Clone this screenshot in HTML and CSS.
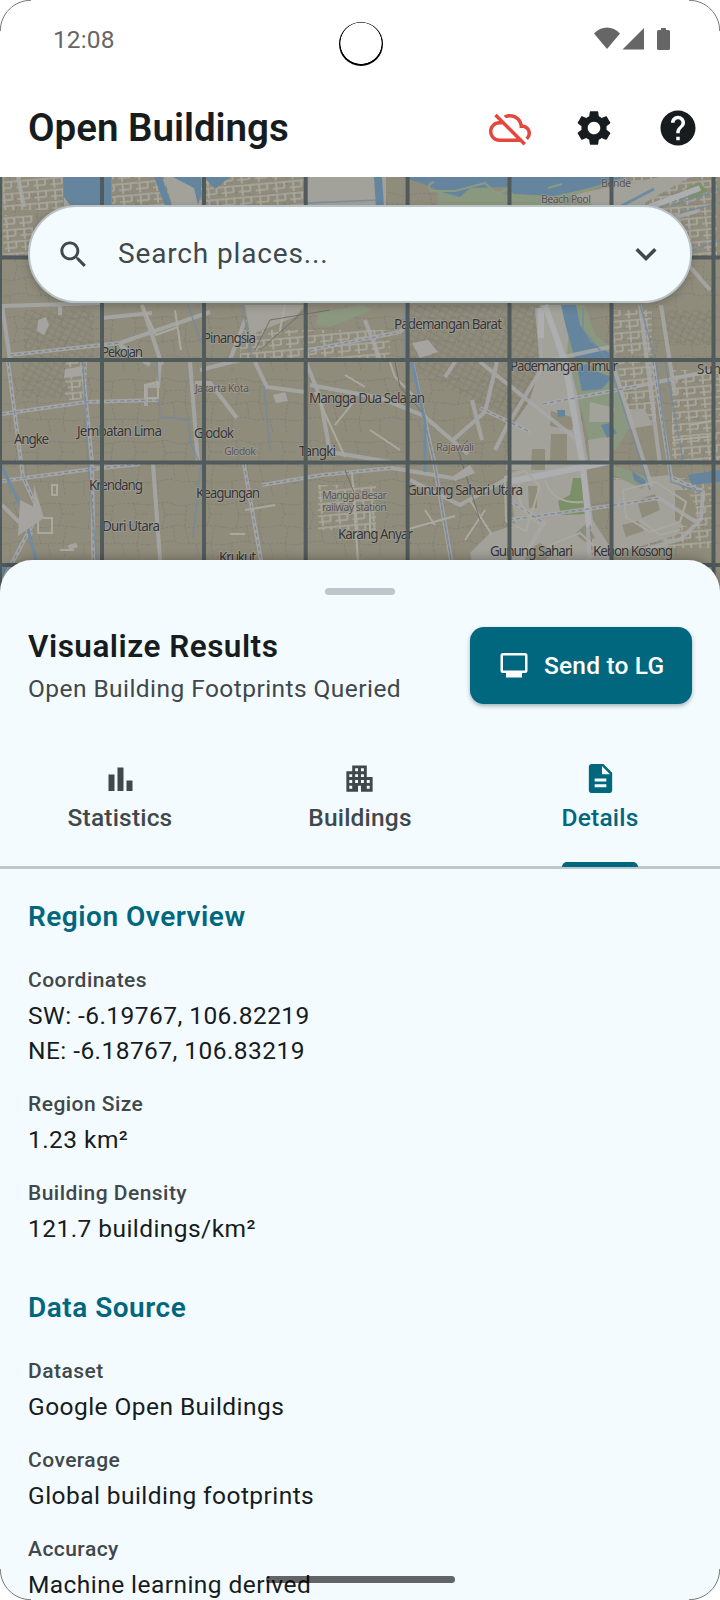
FILE: index.html
```html
<!DOCTYPE html>
<html lang="en">
<head>
<meta charset="utf-8">
<title>Open Buildings</title>
<link rel="stylesheet" href="styles.css">
</head>
<body>
<div class="phone">
  <div class="status">
    <span class="clock">12:08</span>
    <span class="camera"></span>
    <svg class="status-icons" viewBox="0 0 78 24"><path d="M13 22L0 6.500C7-1.500 19-1.500 26 6.500z"/><path d="M28.500 22.500L50 1v21.500z"/><path d="M67 1h5v2h2.500q1.500 0 1.500 1.500v17q0 1.500-1.500 1.500h-10q-1.500 0-1.500-1.500v-17q0-1.500 1.500-1.500H67z"/></svg>
  </div>
  <header class="appbar">
    <h1>Open Buildings</h1>
    <svg class="ic42 red" viewBox="0 0 24 24"><path d="M24 15c0-2.640-2.050-4.780-4.650-4.960C18.670 6.590 15.640 4 12 4c-1.330 0-2.570.36-3.650.97l1.490 1.490C10.510 6.170 11.230 6 12 6c3.040 0 5.500 2.460 5.500 5.500v.5H19c1.660 0 3 1.340 3 3 0 .99-.48 1.850-1.210 2.400l1.410 1.410c1.090-.92 1.800-2.270 1.800-3.810zM4.410 3.860L3 5.270l2.770 2.770h-.42C2.340 8.360 0 10.910 0 14c0 3.310 2.690 6 6 6h11.730l2 2 1.410-1.410L4.410 3.860zM6 18c-2.210 0-4-1.790-4-4s1.790-4 4-4h1.730l8 8H6z"/></svg>
    <svg class="ic42" viewBox="0 0 24 24"><path d="M19.140 12.940c.04-.3.06-.61.06-.94 0-.32-.02-.64-.07-.94l2.030-1.580c.18-.14.23-.41.12-.61l-1.920-3.320c-.12-.22-.37-.29-.59-.22l-2.390.96c-.5-.38-1.030-.7-1.620-.94l-.36-2.540c-.04-.24-.24-.41-.48-.41h-3.840c-.24 0-.43.17-.47.41l-.36 2.540c-.59.24-1.130.57-1.620.94l-2.390-.96c-.22-.08-.47 0-.59.22L2.740 8.870c-.12.21-.08.47.12.61l2.030 1.580c-.05.3-.09.63-.09.94s.02.64.07.94l-2.030 1.580c-.18.14-.23.41-.12.61l1.920 3.320c.12.22.37.29.59.22l2.390-.96c.5.38 1.030.7 1.620.94l.36 2.540c.05.24.24.41.48.41h3.840c.24 0 .44-.17.47-.41l.36-2.540c.59-.24 1.130-.56 1.620-.94l2.390.96c.22.08.47 0 .59-.22l1.920-3.320c.12-.22.07-.47-.12-.61l-2.010-1.580zM12 15.600c-1.980 0-3.600-1.620-3.600-3.600s1.620-3.600 3.600-3.600 3.600 1.620 3.600 3.600-1.620 3.600-3.600 3.600z"/></svg>
    <svg class="ic42" viewBox="0 0 24 24"><path d="M12 2C6.480 2 2 6.480 2 12s4.480 10 10 10 10-4.480 10-10S17.520 2 12 2zm1 17h-2v-2h2v2zm2.070-7.750l-.9.92C13.450 12.900 13 13.500 13 15h-2v-.5c0-1.100.45-2.100 1.170-2.830l1.240-1.260c.37-.36.59-.86.59-1.410 0-1.100-.9-2-2-2s-2 .9-2 2H8c0-2.210 1.790-4 4-4s4 1.790 4 4c0 .88-.36 1.680-.93 2.250z"/></svg>
  </header>
  <section class="map">
    <svg class="map-art" viewBox="0 177 720 423">
      <defs>
        <pattern id="lanes" width="74" height="62" patternUnits="userSpaceOnUse">
          <path class="lane" d="M0 9l18-3 14 4 20-3 22 2M0 31l12 2 17-4 15 3 12-3 18 2M0 49l22-4 13 3 20-1 19 2M14 7l3 12-3 13M39 9l-2 20 4 19M60 7l2 11-3 12M25 30l2 15M66 31l-3 17 2 14M10 48v14M48 48l3 14M17 19l20-1M62 18h12"/>
        </pattern>
        <pattern id="dense" width="7" height="6" patternUnits="userSpaceOnUse" patternTransform="rotate(28)"><path class="dense" d="M0 1h7M2 1v5"/></pattern>
        <pattern id="streets" width="17" height="12" patternUnits="userSpaceOnUse" patternTransform="rotate(-5)"><path class="street" d="M0 2h17M0 8h12M4 2v10M12 2v6"/></pattern>
      </defs>
      <rect class="land" y="177" width="720" height="423"/>
      <rect y="177" width="720" height="423" fill="url(#lanes)"/>
      <!-- dense quarters -->
      <path fill="url(#dense)" d="M24 310h70v50H24zM22 362h45v36H22zM410 305h130v52l-15 70-30-15-88-45zM665 310h50v35h-50z"/>
      <path fill="url(#streets)" d="M3 177h60v33H3zM3 215h30v40H3zM112 177h90v30h-90zM204 177h100v30H204zM612 177h105v80H612zM612 310h40v45h-40zM612 362h44v60h-44zM672 370h48v90h-48zM318 485h58v45h-58zM240 330h150v28H240zM612 478h100v70H612zM65 362h22v38H65z"/>
      <!-- pale industrial and airport ground -->
      <path class="pale" d="M542 362h30l16 98-40 12-42-2 3-40 20-28zM509 472l76-12 8 60 19 30v48H480l-10-45 20-20 25-8zM540 305h32l4 58h-35zM245 305h60l-10 12-45 18zM615 408l30 2 8 15-30 5zM612 480l60-5 20 25-15 35-65 20z"/>
      <path class="pale" d="M306 177h80v30h-80zM64 177v30h28M164 177h30l8 28h-30zM570 195l90-18h30l-70 40z"/>
      <!-- airport apron blocks -->
      <path class="land" d="M551 434h16v27h-17zM532 449h13v21h-14zM528 486h9v22h-8zM551 411l24 7-3 12-22-4zM575 534l12-11 8 15-10 4zM645 429l23-7v36l-23 2zM675 490h12l10 20-8 18-14-8zM637 500l18-6 5 16-18 8zM520 555l20-12 15 10-20 14zM622 525l16-4 6 10-18 6z"/>
      <path class="green" d="M571 305h14l10 30 20 15 14 78-12 20-22 16-10-40-18-70zM612 465l36 12-6 12-30-15zM318 313l45-8 8 5-40 17-15-2zM438 183l25-5 45 17 55-14 65-4-58 20-35 11-98-1z"/>
      <path class="park" d="M573 478h12l4 36-28 1-3-14 12-6zM685 189l14-7 9 9-18 9z"/>
      <path class="pale" d="M590 402l25 6-4 14-22 0zM588 440l24-4v22l-22 4z"/>
      <!-- water -->
      <path class="water" d="M63 177h48v28H70l-6-8zM154 177h8l10 29-6 2zM173 177h28v18l-3 10-4-17zM204 177h26l-15 12zM374 177h8l2 30-8 1zM402 177h225l-38 11-35 8-40-2-7-7-37 1-10 9-18-5-18-8zM561 305h15l4 20 11 17 18 11v6h-34l-9-32zM577 368l12-5 6 8 17 6-10 12-20 2zM601 425l9-2 7 10-10 5zM632 471l14 10-2 6-10-7zM688 475l32-5v12l-28 3zM2 568l12-8 8 14-20 18zM557 410h8v6l-7 1z"/>
      <path class="cut" d="M430 191h25l30-8 12 11 15-7M434 182q-8 2-3 10M548 188l14-4"/>
      <!-- main roads -->
      <path class="road" d="M2 414l84-12 72-2M8 362l15 115 16 35-37 70M2 481l90-12 48-5M18 177l6 30M2 305l8 55M2 306l100-3M10 355l110-12 90-31M142 305l20 60M120 345l30 20M255 362l12 25 38 5M160 362l-2 24h-12v20M200 370l40-10M195 383l15 0 27 35M244 464l24 136M262 485l60-10 70-7 60 10M310 385l70 13 44 18 44 38M310 350l90-18 10-10M306 362l14 35 10 55 60 10M412 362l22 100 24 138M495 450l12-24 35-58-5-60M568 362l15 95 5 70 3 73M480 408l50 24M509 480l100-20M543 404l95-18 82-17M653 362l18 115 32 15-2 27-20 20-35 10M509 520l100-14 50-8 40 26M509 500l35 23-20 34-30 30M612 362l40 125M640 305l20 160M661 305l14 90M480 362l100 80M455 362l-10 15M472 400l10 40M497 362l-12 50-32 28M710 290l-30-35-40 40M60 305v10M82 362l10 100 2 138M102 318l50-5M153 464l10 136M245 320l-15 40M365 320l15 40M410 480l50 25 50-28M190 362l8 100M2 505l30 30M600 240l100-30M540 362l70-15"/>
      <path class="runway" d="M545 305l20 57 18 105 6 60M509 482l100-20M541 308v30M602 225l98-37"/>
      <!-- canals -->
      <path class="canal" d="M188 305l14 40M157 362l3 55 28 2 3 25 10 22-8 72M242 305l10 53M583 308v22l25 30 42 130M670 206l50-17M680 213l40-10M692 250l28-10M410 362l24 100 24 138M83 362l5 100 12 138M656 362l15 120 30 10M665 362l18 98M640 305l16 57M308 203l70-3M405 305v55M264 386l6 65"/>
      <path class="river" d="M2 467l22 46 22 87M412 362l13 60v50M604 215l50-26"/>
      <path class="dash" d="M2 414l84-12 72-2M8 362l15 115 16 35-37 70M2 481l90-12 48-5M10 355l110-12M244 464l24 136M262 485l60-10 70-7M412 362l22 100 24 138M509 520l100-14 50-8M653 362l18 115 32 15M543 404l95-18M310 350l90-18M82 362l10 100 2 138M620 222l80-30M509 500l35 23M480 408l50 24M590 525l5 60"/>
      <path class="minor" d="M142 305l14 30 22-8M175 310l6 40M285 305l-5 25M315 392l30 65M390 362l5 15 20 20M345 375l20 12M355 400l-20 25M370 430l30 20M275 505l-30 5M405 530l50-14M425 510l10 15M352 472l8 120M370 512v20M230 534h15M52 485h5v10h-5zM38 518h14v15H38zM60 550h14M145 385l13-3v16h-13zM505 477l20-6 15 15-14 45-20-10zM550 545l30-12 20 18-20 13-22-7zM545 480q8 25 38 22M520 480q-8 25 20 45M690 425l25-5M675 440l40-4M623 490l33-8 30 20-6 20-30 10-24-15zM640 520l20 15 20-5M465 540l20-30M470 500l22 35"/>
      <path class="rail" d="M305 310l-45 40M395 362l5 25 22 25M330 310l-60 10-15 30M345 470l12 30M468 440l-10 10 22 70"/>
      <path class="minor-fill" d="M65 370l16-4v10l-17 2zM273 395l12-3 3 9-12 2zM34 485l10 33-12 8zM68 545l8-2 2 4-9 3zM450 478l20-13 5 8-20 8zM38 320l8-3 3 8-5 10-7-4zM20 500l16 8-4 18-14 10zM412 343l16-3 10 12-18 6z"/>
      <!-- place names -->
      <g class="names">
        <text x="101" y="357" textLength="42">Pekojan</text>
        <text x="203" y="343" textLength="53">Pinangsia</text>
        <text x="394" y="329" textLength="108">Pademangan Barat</text>
        <text x="510" y="370.500" textLength="108">Pademangan Timur</text>
        <text x="697" y="374">Sunt</text>
        <text x="309" y="403" textLength="116">Mangga Dua Selatan</text>
        <text x="14" y="444" textLength="35">Angke</text>
        <text x="77" y="435.500" textLength="85">Jembatan Lima</text>
        <text x="194" y="438" textLength="40">Glodok</text>
        <text x="299" y="455.500" textLength="37">Tangki</text>
        <text x="89" y="489.500" textLength="54">Krendang</text>
        <text x="196" y="498" textLength="64">Keagungan</text>
        <text x="407" y="495" textLength="116">Gunung Sahari Utara</text>
        <text x="102" y="531" textLength="58">Duri Utara</text>
        <text x="338" y="538.500" textLength="75">Karang Anyar</text>
        <text x="219" y="562" textLength="37">Krukut</text>
        <text x="490" y="555.500" textLength="83">Gunung Sahari</text>
        <text x="593" y="555.500" textLength="80">Kebon Kosong</text>
      </g>
      <g class="stations">
        <text x="601" y="187" textLength="30">Bende</text>
        <text x="541" y="203" textLength="50">Beach Pool</text>
        <text x="195" y="391.500" textLength="54">Jakarta Kota</text>
        <text x="224" y="455" textLength="32">Glodok</text>
        <text x="436" y="451" textLength="38">Rajawali</text>
        <text x="322" y="499" textLength="65">Mangga Besar</text>
        <text x="322" y="511" textLength="65">railway station</text>
      </g>
      <path class="grid" d="M0 177v423M102 177v423M204 177v423M305.700 177v423M407.600 177v423M509.500 177v423M611.500 177v423M713.500 177v423M0 257.500h720M0 360h720M0 462.500h720M0 565h720"/>
    </svg>
    <div class="search">
      <svg class="ic35" viewBox="0 0 24 24"><path d="M15.500 14h-.79l-.28-.27C15.410 12.590 16 11.110 16 9.500 16 5.910 13.090 3 9.500 3S3 5.910 3 9.500 5.910 16 9.500 16c1.610 0 3.090-.59 4.230-1.570l.27.28v.79l5 4.990L20.490 19l-4.990-5zm-6 0C7.010 14 5 11.990 5 9.500S7.010 5 9.500 5 14 7.010 14 9.500 11.990 14 9.500 14z"/></svg>
      <span class="placeholder">Search places...</span>
      <svg class="ic42" viewBox="0 0 24 24"><path d="M7.410 8.590L12 13.170l4.590-4.580L18 10l-6 6-6-6 1.410-1.410z"/></svg>
    </div>
  </section>
  <main class="sheet">
    <div class="handle"></div>
    <div class="head">
      <div>
        <h2>Visualize Results</h2>
        <p class="sub">Open Building Footprints Queried</p>
      </div>
      <button class="send"><svg viewBox="0 0 28 25"><path fill-rule="evenodd" d="M3 0h22q2.500 0 2.500 2.500v15q0 2.500-2.500 2.500h-3v4.500H6V20H3q-2.500 0-2.500-2.500v-15Q.5 0 3 0zM3 2.500v15h22v-15z"/></svg><span>Send to LG</span></button>
    </div>
    <nav class="tabs">
      <div class="tab"><svg class="ic35" viewBox="0 0 35 35"><path d="M5.500 13.500h6V30h-6zM14.500 6.500h6V30h-6zM23.500 19.500h6V30h-6z"/></svg><span>Statistics</span></div>
      <div class="tab"><svg class="ic35" viewBox="0 0 24 24"><path d="M17 11V3H7v4H3v14h8v-4h2v4h8V11h-4zM7 19H5v-2h2v2zm0-4H5v-2h2v2zm0-4H5V9h2v2zm4 4H9v-2h2v2zm0-4H9V9h2v2zm0-4H9V5h2v2zm4 8h-2v-2h2v2zm0-4h-2V9h2v2zm0-4h-2V5h2v2zm4 12h-2v-2h2v2zm0-4h-2v-2h2v2z"/></svg><span>Buildings</span></div>
      <div class="tab active"><svg class="ic35" viewBox="0 0 24 24"><path d="M14 2H6c-1.100 0-1.990.9-1.990 2L4 20c0 1.100.89 2 1.990 2H18c1.100 0 2-.9 2-2V8l-6-6zm2 16H8v-2h8v2zm0-4H8v-2h8v2zm-3-5V3.500L18.500 9H13z"/></svg><span>Details</span></div>
    </nav>
    <div class="details">
      <section>
        <h3>Region Overview</h3>
        <dl>
          <div><dt>Coordinates</dt><dd>SW: -6.19767, 106.82219<br>NE: -6.18767, 106.83219</dd></div>
          <div><dt>Region Size</dt><dd>1.23 km²</dd></div>
          <div><dt>Building Density</dt><dd>121.7 buildings/km²</dd></div>
        </dl>
      </section>
      <section>
        <h3>Data Source</h3>
        <dl>
          <div><dt>Dataset</dt><dd>Google Open Buildings</dd></div>
          <div><dt>Coverage</dt><dd>Global building footprints</dd></div>
          <div><dt>Accuracy</dt><dd>Machine learning derived</dd></div>
        </dl>
      </section>
    </div>
  </main>
  <div class="homebar"></div>
  <svg class="corner tl" viewBox="0 0 32 32"><path d="M0 0h32Q0 0 0 32z"/><path class="arc" d="M.3 31C.3 14 14 .3 31 .3"/></svg>
  <svg class="corner tr" viewBox="0 0 32 32"><path d="M0 0h32Q0 0 0 32z"/><path class="arc" d="M.3 31C.3 14 14 .3 31 .3"/></svg>
  <svg class="corner bl" viewBox="0 0 32 32"><path d="M0 0h32Q0 0 0 32z"/><path class="arc" d="M.3 31C.3 14 14 .3 31 .3"/></svg>
  <svg class="corner br" viewBox="0 0 32 32"><path d="M0 0h32Q0 0 0 32z"/><path class="arc" d="M.3 31C.3 14 14 .3 31 .3"/></svg>
</div>
</body>
</html>
```
FILE: styles.css
```css
* { box-sizing: border-box; margin: 0; padding: 0; }
body { background: #fff; }
.phone {
  position: relative;
  display: flex;
  flex-direction: column;
  width: 720px;
  height: 1600px;
  overflow: hidden;
  background: #fff;
  color: #171c1e;
  font-family: Roboto, sans-serif;
}
svg { display: block; flex: none; fill: currentColor; }
.ic42 { width: 42px; height: 42px; }
.ic35 { width: 35px; height: 35px; }

.status, .appbar, .map { flex: none; }
.status {
  display: grid;
  grid-template-columns: 1fr 44px 1fr;
  height: 80px;
  padding: 22px 48px 0 53px;
  color: #666;
}
.clock { font-size: 24.500px; line-height: 35px; letter-spacing: .1px; }
.camera {
  width: 44px;
  height: 44px;
  margin-left: -2px;
  border-radius: 50%;
  background: radial-gradient(circle at 22px 21.200px, #fff 20.300px, #000 20.900px);
}
.status-icons { width: 78px; height: 24px; margin: 5px 0 0; justify-self: end; }

.appbar { display: flex; align-items: center; height: 97px; padding: 0 21px 2px 28px; }
.appbar h1 { flex: 1; font-size: 38.500px; font-weight: 600; line-height: 49px; }
.appbar .ic42 { margin-left: 42px; }
.appbar .red { color: #e2483d; }

.map { position: relative; display: flex; height: 383px; padding: 28px 28px 0; }
.map-art { position: absolute; left: 0; top: 0; width: 720px; height: 423px; }
.land { fill: #908c7c; }
.lane { fill: none; stroke: #7c7a72; stroke-width: .9; stroke-dasharray: 3 1.500; opacity: .75; }
.dense { fill: none; stroke: #7c7970; stroke-width: 1; opacity: .7; }
.street { fill: none; stroke: #aaa8a0; stroke-width: 1.700; }
.pale { fill: #a2a19a; }
.green { fill: #8b9880; }
.park { fill: #7c9068; }
.water { fill: #64859d; }
.cut { fill: none; stroke: #8b9a83; stroke-width: 2; }
.canal { fill: none; stroke: #7289a0; stroke-width: 1.500; opacity: .8; }
.river { fill: none; stroke: #6d8ba2; stroke-width: 3; }
.road { fill: none; stroke: #a7a8a8; stroke-width: 4; opacity: .85; }
.runway { fill: none; stroke: #adaeb0; stroke-width: 6; }
.dash { fill: none; stroke: #7b8799; stroke-width: 1.200; stroke-dasharray: 4 3; }
.minor { fill: none; stroke: #aaa99f; stroke-width: 2; }
.minor-fill { fill: #a5a4a0; }
.rail { fill: none; stroke: #706f6b; stroke-width: 1; }
.grid { fill: none; stroke: #515b5c; stroke-width: 4; }
.names, .stations { font-family: "Noto Sans", sans-serif; paint-order: stroke; stroke: #aaa79a; stroke-opacity: .6; stroke-width: 1.600px; }
.names { font-size: 13.500px; fill: #35353b; }
.stations { font-size: 10.800px; fill: #55555c; }

.search {
  position: relative;
  display: flex;
  align-items: center;
  width: 664px;
  height: 98px;
  padding: 0 23px 0 26px;
  border: 2px solid #b9c3c6;
  border-radius: 49px;
  background: #f4fbfe;
  color: #3f484b;
  box-shadow: 0 3px 8px rgba(0, 0, 0, .2);
}
.placeholder { flex: 1; margin-left: 27px; font-size: 28px; line-height: 42px; letter-spacing: .85px; }

.sheet {
  position: relative;
  flex: 1;
  min-height: 0;
  border-radius: 32px 32px 0 0;
  background: #f4fbfe;
  box-shadow: 0 -2px 10px rgba(0, 0, 0, .25);
}
.handle { width: 70px; height: 7px; margin: 28px auto 0; border-radius: 4px; background: #bdc6ca; }
.head { display: flex; justify-content: space-between; padding: 32px 28px 0; }
.head h2 { margin-top: 1px; font-size: 31.500px; font-weight: 600; line-height: 38px; letter-spacing: .5px; }
.sub { margin-top: 5px; font-size: 24.500px; line-height: 35px; letter-spacing: .44px; color: #40484b; }
.send {
  display: flex;
  align-items: center;
  width: 222px;
  height: 77px;
  padding: 0 29px 0 30px;
  border: 0;
  border-radius: 14px;
  background: #00677f;
  color: #fff;
  font: 500 24.500px/35px Roboto, sans-serif;
  letter-spacing: .18px;
  box-shadow: 0 2px 4px rgba(0, 40, 60, .35);
}
.send svg { width: 28px; height: 25px; margin-right: 16px; }
.send span { white-space: nowrap; }

.tabs { display: grid; grid-template-columns: repeat(3, 1fr); height: 163px; border-bottom: 3px solid #bfc8cc; color: #40484b; }
.tab {
  display: flex;
  flex-direction: column;
  align-items: center;
  justify-self: center;
  position: relative;
  padding-top: 54.500px;
  font-size: 24.500px;
  font-weight: 500;
  line-height: 35px;
  letter-spacing: .18px;
}
.tab span { margin-top: 4px; }
.active { color: #00677f; }
.active::after { content: ""; position: absolute; left: 0; right: 0; bottom: -1px; height: 5px; border-radius: 5px 5px 0 0; background: #00677f; }

.details { padding: 26.500px 28px 0; }
.details section + section { margin-top: 41px; }
.details h3 { color: #00677f; font-size: 28px; font-weight: 600; line-height: 42px; letter-spacing: .5px; }
.details dl { display: grid; gap: 22.200px; margin-top: 28px; }
.details dt { color: #40484b; font-size: 21px; font-weight: 500; line-height: 28px; letter-spacing: .46px; }
.details dd { margin-top: 4px; font-size: 24.500px; line-height: 35px; letter-spacing: .44px; }

.homebar { position: absolute; left: 266px; bottom: 17px; width: 189px; height: 7px; border-radius: 4px; background: rgba(0, 0, 0, .6); }
.corner { position: absolute; width: 32px; height: 32px; fill: #fff; }
.corner .arc { fill: none; stroke: #777; stroke-width: 1; }
.tl { left: 0; top: 0; }
.tr { right: 0; top: 0; transform: scaleX(-1); }
.bl { left: 0; bottom: 0; transform: scaleY(-1); }
.br { right: 0; bottom: 0; transform: scale(-1); }
```
